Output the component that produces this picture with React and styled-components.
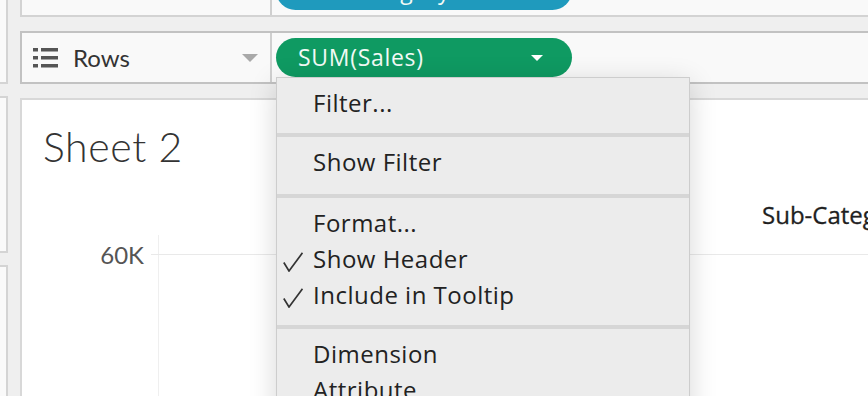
import React from 'react';
import styled, { createGlobalStyle } from 'styled-components';

const GlobalStyle = createGlobalStyle`
  html, body { margin: 0; padding: 0; background: #efefef; overflow: hidden; }
  body { font-family: Lato, "Open Sans", sans-serif; color: #333; }
  * { box-sizing: border-box; }
`;

const Page = styled.div`
  display: flex;
  gap: 12px;
  width: 868px;
  height: 396px;
  overflow: hidden;
  background: #efefef;
`;

const SideStrip = styled.div`
  width: 8px;
  flex: none;
  display: flex;
  flex-direction: column;
  gap: 12px;
`;

const SidePanel = styled.div`
  flex: none;
  height: ${(p) => p.$h}px;
  margin-top: ${(p) => p.$mt || 0}px;
  background: #fafafa;
  border: 2px solid #d4d4d4;
  border-left: none;
`;

const Main = styled.div`
  flex: 1;
  min-width: 0;
  display: flex;
  flex-direction: column;
  gap: 14px;
`;

const Shelf = styled.div`
  flex: none;
  display: grid;
  grid-template-columns: 250px 1fr;
  height: ${(p) => p.$h}px;
  margin-top: ${(p) => p.$mt || 0}px;
  background: #f9f9f9;
  border: 2px solid ${(p) => p.$line};
  border-right: none;
`;

const ShelfLabel = styled.div`
  display: flex;
  align-items: center;
  padding: 0 12px 0 11px;
  border-right: 2px solid #cfcfcf;
  font-size: 24px;
  color: #333;
`;

const LabelText = styled.span`
  flex: 1;
  margin-left: 14px;
`;

const ShelfDrop = styled.div`
  position: relative;
  display: flex;
  align-items: center;
  padding-left: 4px;
`;

const PillWrap = styled.div`
  position: relative;
`;

const Pill = styled.div`
  width: 296px;
  height: 39px;
  border-radius: 20px;
  background: ${(p) => p.$bg};
  color: #f2faf6;
  display: flex;
  align-items: center;
  justify-content: space-between;
  padding: 0 29px 0 22px;
  font-family: "Open Sans", Lato, sans-serif;
  font-size: 23px;
  letter-spacing: 0.7px;
  line-height: 1;
  white-space: nowrap;
`;

const Menu = styled.div`
  position: absolute;
  top: 100%;
  left: 0;
  width: 414px;
  background: #ececec;
  border: 1px solid #cdcdcd;
  box-shadow: 0 6px 26px rgba(0, 0, 0, 0.16);
  z-index: 10;
`;

const MenuSection = styled.div`
  padding: 7px 0 ${(p) => p.$pb || 12}px;
  & + & {
    border-top: 4px solid #d6d6d6;
  }
`;

const MenuItem = styled.div`
  display: grid;
  grid-template-columns: 36px 1fr;
  align-items: center;
  height: 36px;
  font-family: "Open Sans", Lato, sans-serif;
  font-size: 24px;
  letter-spacing: 0.5px;
  line-height: 36px;
  color: #222;
  white-space: nowrap;
`;

const CheckSlot = styled.span`
  display: flex;
  padding-left: 6px;
  padding-top: 5px;
`;

const Sheet = styled.div`
  flex: 1;
  min-height: 0;
  background: #fff;
  border-top: 2px solid #d8d8d8;
  border-left: 2px solid #d8d8d8;
  display: flex;
  flex-direction: column;
  overflow: hidden;
`;

const Title = styled.div`
  margin: 23px 0 0 21px;
  font-size: 41px;
  font-weight: 300;
  letter-spacing: 0.6px;
  line-height: 48px;
  color: #333;
`;

const HeaderRow = styled.div`
  margin-top: 28px;
  padding-left: 740px;
  height: 32px;
  font-family: "Open Sans", sans-serif;
  font-size: 24px;
  font-weight: 500;
  line-height: 32px;
  color: #1f1f1f;
  -webkit-text-stroke: 0.3px #1f1f1f;
  white-space: nowrap;
`;

const ChartBody = styled.div`
  margin-top: 4px;
  flex: 1;
  display: grid;
  grid-template-columns: 136px 1fr;
`;

const AxisLabels = styled.div`
  padding: 4px 14px 0 0;
  text-align: right;
  font-size: 24px;
  line-height: 32px;
  color: #555;
`;

const Plot = styled.div`
  border-left: 1px solid #efefef;
`;

const GridLine = styled.div`
  margin: 19px 0 0 -8px;
  height: 1px;
  background: #e9e9e9;
`;

const ListIcon = () => (
  <svg width="26" height="20" viewBox="0 0 26 20" fill="#555">
    <rect x="0" y="0" width="5" height="3.5" />
    <rect x="8" y="0" width="17" height="3.5" />
    <rect x="0" y="8" width="5" height="3.5" />
    <rect x="8" y="8" width="17" height="3.5" />
    <rect x="0" y="16" width="5" height="3.5" />
    <rect x="8" y="16" width="17" height="3.5" />
  </svg>
);

const Caret = ({ color, w, h }) => (
  <svg width={w} height={h} viewBox={`0 0 ${w} ${h}`}>
    <polygon points={`0,0 ${w},0 ${w / 2},${h}`} fill={color} />
  </svg>
);

const Check = () => (
  <svg width="20" height="20" viewBox="0 0 20 20">
    <path d="M0.8 10.5 L6 19 L19.5 0.8" fill="none" stroke="#333" strokeWidth="1.7" />
  </svg>
);

const sections = [
  { pb: 12, items: [{ label: 'Filter...' }] },
  { pb: 14, items: [{ label: 'Show Filter' }] },
  {
    pb: 12,
    items: [
      { label: 'Format...' },
      { label: 'Show Header', checked: true },
      { label: 'Include in Tooltip', checked: true },
    ],
  },
  { pb: 12, items: [{ label: 'Dimension' }, { label: 'Attribute' }, { label: 'Measure (Sum)' }] },
];

export default function App() {
  return (
    <>
      <GlobalStyle />
      <Page>
        <SideStrip>
          <SidePanel $h={96} $mt={-12} />
          <SidePanel $h={157} />
          <SidePanel $h={200} />
        </SideStrip>
        <Main>
          <Shelf $h={54} $mt={-37} $line="#d3d3d3">
            <ShelfLabel>
              <ListIcon />
              <LabelText>Columns</LabelText>
            </ShelfLabel>
            <ShelfDrop>
              <Pill $bg="#1f9abd">
                <span>Sub-Category</span>
                <Caret color="#fff" w={12} h={6} />
              </Pill>
            </ShelfDrop>
          </Shelf>
          <Shelf $h={53} $line="#c2c2c2">
            <ShelfLabel>
              <ListIcon />
              <LabelText>Rows</LabelText>
              <Caret color="#a9a9a9" w={16} h={8} />
            </ShelfLabel>
            <ShelfDrop>
              <PillWrap>
                <Pill $bg="#0f9a62">
                  <span>SUM(Sales)</span>
                  <Caret color="#fff" w={12} h={6} />
                </Pill>
                <Menu>
                  {sections.map((sec, i) => (
                    <MenuSection key={i} $pb={sec.pb}>
                      {sec.items.map((it) => (
                        <MenuItem key={it.label}>
                          <CheckSlot>{it.checked ? <Check /> : null}</CheckSlot>
                          <span>{it.label}</span>
                        </MenuItem>
                      ))}
                    </MenuSection>
                  ))}
                </Menu>
              </PillWrap>
            </ShelfDrop>
          </Shelf>
          <Sheet>
            <Title>Sheet 2</Title>
            <HeaderRow>Sub-Category</HeaderRow>
            <ChartBody>
              <AxisLabels>60K</AxisLabels>
              <Plot>
                <GridLine />
              </Plot>
            </ChartBody>
          </Sheet>
        </Main>
      </Page>
    </>
  );
}
